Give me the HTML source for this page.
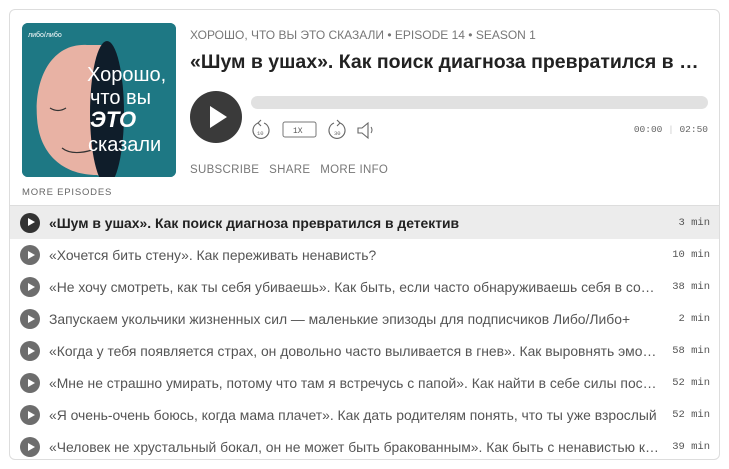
<!DOCTYPE html>
<html><head><meta charset="utf-8"><style>
*{margin:0;padding:0;box-sizing:border-box}
body{width:729px;height:469px;background:#fff;font-family:"Liberation Sans","Noto Sans CJK SC",sans-serif;position:relative;overflow:hidden}
.card{position:absolute;left:9px;top:9px;width:711px;height:451px;border:1px solid #ddd;border-radius:6px;overflow:hidden}
.cover{position:absolute;left:12px;top:13px;width:154px;height:154px;border-radius:6px;background:#1f7a86;overflow:hidden}
.meta{position:absolute;left:180px;top:18px;font-size:12px;color:#777;white-space:nowrap}
.title{position:absolute;left:180px;top:41px;width:520px;font-size:19.5px;font-weight:bold;color:#222;white-space:nowrap;overflow:hidden;text-overflow:ellipsis}
.play{position:absolute;left:180px;top:81px;width:52px;height:52px;border-radius:50%;background:#3a3a3a}
.bar{position:absolute;left:241px;top:86px;width:457px;height:13px;border-radius:7px;background:#e1e1e1}
.time{position:absolute;right:11px;top:114px;font-family:"Liberation Mono",monospace;font-size:9.5px;color:#666}
.links{position:absolute;left:180px;top:154px;font-size:11.5px;color:#777;letter-spacing:.3px;white-space:nowrap}
.links span{margin-right:10px}
.more{position:absolute;left:12px;top:177px;font-size:9.5px;color:#666;letter-spacing:.8px}
.list{position:absolute;left:0;top:195px;width:711px;border-top:1px solid #ddd}
.row{height:32px;display:flex;align-items:center;padding:0 11px 0 10px;font-size:13.9px;color:#555}
.row.act{background:#ececec;color:#222;font-weight:bold;height:33px}
.ic{width:20px;height:20px;border-radius:50%;background:#6d6d6d;flex:none;margin-right:9px;position:relative}
.act .ic{background:#333}
.ic:after{content:"";position:absolute;left:7.5px;top:5.5px;border-left:7px solid #fff;border-top:4.5px solid transparent;border-bottom:4.5px solid transparent}
.t{flex:1;white-space:nowrap;overflow:hidden;text-overflow:ellipsis}
.d{flex:none;width:50px;text-align:right;font-family:"Liberation Mono",monospace;font-size:10.5px;font-weight:normal;color:#555}
</style></head><body>
<div class="card">
<div class="cover">
<svg width="154" height="154" viewBox="0 0 154 154">
<rect width="154" height="154" fill="#1e7884"/>
<path d="M65 22 C30 20 12 55 15 95 C17 130 40 152 75 152 L80 154 L80 22 Z" fill="#e8b2a4"/>
<ellipse cx="85" cy="90" rx="17" ry="72" fill="#0f1d2a"/>
<path d="M28 85 q8 5 16 0" stroke="#333" fill="none" stroke-width="1.2"/>
<path d="M40 125 q10 8 30 2" stroke="#333" fill="none" stroke-width="1.2"/>
<text x="6" y="14" font-size="7" fill="#fff" font-family="Liberation Sans">либо/либо</text>
<text x="65" y="58" font-size="20" fill="#fff" font-family="Liberation Sans">Хорошо,</text>
<text x="68" y="81" font-size="20" fill="#fff" font-family="Liberation Sans">что вы</text>
<text x="68" y="104" font-size="22" fill="#fff" font-weight="bold" font-style="italic" font-family="Liberation Sans">ЭТО</text>
<text x="66" y="128" font-size="20" fill="#fff" font-family="Liberation Sans">сказали</text>
</svg>
</div>
<div class="meta">ХОРОШО, ЧТО ВЫ ЭТО СКАЗАЛИ • EPISODE 14 • SEASON 1</div>
<div class="title">«Шум в ушах». Как поиск диагноза превратился в детектив</div>
<div class="play"><div style="position:absolute;left:20px;top:15px;border-left:17px solid #fff;border-top:11px solid transparent;border-bottom:11px solid transparent"></div></div>
<div class="bar"></div>
<svg style="position:absolute;left:241px;top:108px" width="140" height="24" viewBox="0 0 140 24">
<path d="M7 5 a8 8 0 1 0 6 0" stroke="#666" fill="none" stroke-width="1.1"/><path d="M10 2 l-3 3 l3 3" stroke="#666" fill="none" stroke-width="1.1"/>
<text x="6" y="17" font-size="5.5" fill="#666" font-family="Liberation Mono">10</text>
<rect x="32" y="4" width="33" height="15" rx="2" fill="none" stroke="#777"/>
<text x="42" y="15" font-size="8" fill="#555" font-family="Liberation Mono">1X</text>
<path d="M89 5 a8 8 0 1 1 -6 0" stroke="#666" fill="none" stroke-width="1.1"/><path d="M86 2 l3 3 l-3 3" stroke="#666" fill="none" stroke-width="1.1"/>
<text x="83" y="17" font-size="5.5" fill="#666" font-family="Liberation Mono">30</text>
<path d="M107 10 h4 l6 -5 v15 l-6 -5 h-4 z" stroke="#666" fill="none" stroke-width="1.1"/><path d="M120 9 q2 3 0 6" stroke="#666" fill="none"/>
</svg>
<div class="time">00:00 <span style="color:#ccc">|</span> 02:50</div>
<div class="links"><span>SUBSCRIBE</span><span>SHARE</span><span>MORE INFO</span></div>
<div class="more">MORE EPISODES</div>
<div class="list">
<div class="row act"><div class="ic"></div><div class="t">«Шум в ушах». Как поиск диагноза превратился в детектив</div><div class="d">3 min</div></div>
<div class="row"><div class="ic"></div><div class="t">«Хочется бить стену». Как переживать ненависть?</div><div class="d">10 min</div></div>
<div class="row"><div class="ic"></div><div class="t">«Не хочу смотреть, как ты себя убиваешь». Как быть, если часто обнаруживаешь себя в созависимых отношениях</div><div class="d">38 min</div></div>
<div class="row"><div class="ic"></div><div class="t">Запускаем укольчики жизненных сил — маленькие эпизоды для подписчиков Либо/Либо+</div><div class="d">2 min</div></div>
<div class="row"><div class="ic"></div><div class="t">«Когда у тебя появляется страх, он довольно часто выливается в гнев». Как выровнять эмоциональный фон</div><div class="d">58 min</div></div>
<div class="row"><div class="ic"></div><div class="t">«Мне не страшно умирать, потому что там я встречусь с папой». Как найти в себе силы после утраты</div><div class="d">52 min</div></div>
<div class="row"><div class="ic"></div><div class="t">«Я очень-очень боюсь, когда мама плачет». Как дать родителям понять, что ты уже взрослый</div><div class="d">52 min</div></div>
<div class="row"><div class="ic"></div><div class="t">«Человек не хрустальный бокал, он не может быть бракованным». Как быть с ненавистью к себе</div><div class="d">39 min</div></div>
</div>
</div>
</body></html>
